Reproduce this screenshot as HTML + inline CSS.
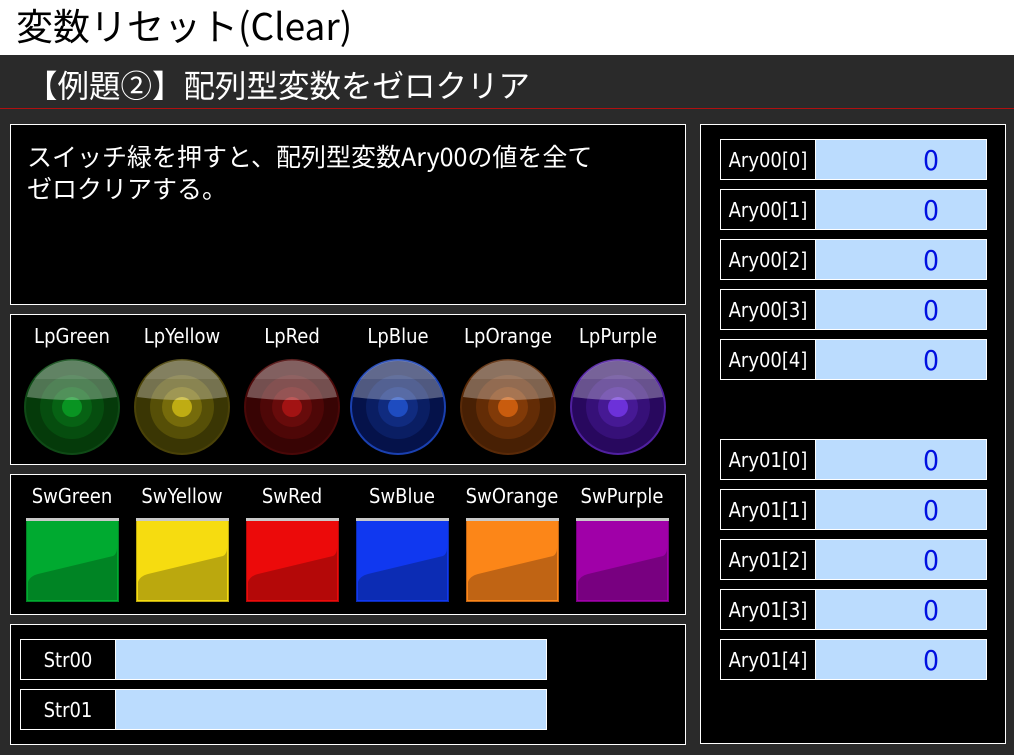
<!DOCTYPE html>
<html><head><meta charset="utf-8"><style>
*{margin:0;padding:0;box-sizing:border-box}
body{width:1014px;height:755px;background:#2a2a2a;position:relative;overflow:hidden;font-family:"DejaVu Sans Condensed","Liberation Sans","Noto Sans CJK JP",sans-serif;color:#fff}
.a{position:absolute}
.box{position:absolute;background:#000;border:1px solid #fff}
.top{left:0;top:0;width:1014px;height:55px;background:#fff;color:#000;font-size:37px;line-height:48px;padding-left:16px;font-family:"Noto Sans CJK JP",sans-serif}
.h2{left:26px;top:63px;font-size:31.5px;line-height:42px;font-family:"Noto Sans CJK JP",sans-serif;color:#fff}
.lbl{position:absolute;font-size:20px;text-align:center;width:110px;line-height:24px}
.row{position:absolute;height:41px;border:1px solid #fff;background:#bbdcfe}
.row .k{position:absolute;left:0;top:0;height:39px;width:95px;background:#000;border-right:1px solid #fff;font-size:20px;line-height:41px;text-align:center;color:#fff}
.row .v{position:absolute;left:180px;width:60px;top:0;text-align:center;color:#0010e0;font-size:28px;line-height:42px;font-family:"DejaVu Sans Condensed","Liberation Sans",sans-serif}
</style></head><body>
<div class="a top">変数リセット(Clear)</div>
<div class="a h2">【例題②】配列型変数をゼロクリア</div>
<div class="a" style="left:0;top:108px;width:1014px;height:1px;background:#b01010"></div>

<div class="box" style="left:10px;top:124px;width:676px;height:181px;font-family:'Noto Sans CJK JP',sans-serif;font-size:25px;line-height:32px;padding:15px 0 0 16px">スイッチ緑を押すと、配列型変数Ary00の値を全て<br>ゼロクリアする。</div>

<div class="box" style="left:10px;top:314px;width:676px;height:151px"></div>
<div class="box" style="left:10px;top:474px;width:676px;height:141px"></div>
<div class="box" style="left:10px;top:624px;width:676px;height:121px"></div>
<div class="box" style="left:700px;top:124px;width:306px;height:620px"></div>

<div class="lbl" style="left:17px;top:324px">LpGreen</div>
<div class="lbl" style="left:127px;top:324px">LpYellow</div>
<div class="lbl" style="left:237px;top:324px">LpRed</div>
<div class="lbl" style="left:343px;top:324px">LpBlue</div>
<div class="lbl" style="left:453px;top:324px">LpOrange</div>
<div class="lbl" style="left:563px;top:324px">LpPurple</div>

<svg class="a" style="left:0;top:0" width="700" height="620">
<g id="lamps"></g>
<g id="sws"></g>
</svg>

<div class="lbl" style="left:17px;top:484px">SwGreen</div>
<div class="lbl" style="left:127px;top:484px">SwYellow</div>
<div class="lbl" style="left:237px;top:484px">SwRed</div>
<div class="lbl" style="left:347px;top:484px">SwBlue</div>
<div class="lbl" style="left:457px;top:484px">SwOrange</div>
<div class="lbl" style="left:567px;top:484px">SwPurple</div>

<div class="row" style="left:20px;top:639px;width:527px"><div class="k">Str00</div></div>
<div class="row" style="left:20px;top:689px;width:527px"><div class="k">Str01</div></div>

<div class="row" style="left:720px;top:139px;width:267px"><div class="k">Ary00[0]</div><div class="v">0</div></div>
<div class="row" style="left:720px;top:189px;width:267px"><div class="k">Ary00[1]</div><div class="v">0</div></div>
<div class="row" style="left:720px;top:239px;width:267px"><div class="k">Ary00[2]</div><div class="v">0</div></div>
<div class="row" style="left:720px;top:289px;width:267px"><div class="k">Ary00[3]</div><div class="v">0</div></div>
<div class="row" style="left:720px;top:339px;width:267px"><div class="k">Ary00[4]</div><div class="v">0</div></div>
<div class="row" style="left:720px;top:439px;width:267px"><div class="k">Ary01[0]</div><div class="v">0</div></div>
<div class="row" style="left:720px;top:489px;width:267px"><div class="k">Ary01[1]</div><div class="v">0</div></div>
<div class="row" style="left:720px;top:539px;width:267px"><div class="k">Ary01[2]</div><div class="v">0</div></div>
<div class="row" style="left:720px;top:589px;width:267px"><div class="k">Ary01[3]</div><div class="v">0</div></div>
<div class="row" style="left:720px;top:639px;width:267px"><div class="k">Ary01[4]</div><div class="v">0</div></div>

<script>
var L=[[72,'#053a0a','#0a9a24','#0f4a16'],[182,'#3a3604','#c8b414','#4a4208'],[292,'#380404','#a81414','#4a0808'],[398,'#05124a','#2050c8','#1a40b0'],[508,'#482004','#d06010','#5a2a08'],[618,'#28085e','#7034e0','#5020a0']];
var s='';
L.forEach(function(l){var x=l[0],y=407;
s+='<circle cx="'+x+'" cy="'+y+'" r="47" fill="'+l[1]+'" stroke="'+l[3]+'" stroke-width="2"/>';
s+='<circle cx="'+x+'" cy="'+y+'" r="32" fill="'+l[2]+'" opacity=".2"/>';
s+='<circle cx="'+x+'" cy="'+y+'" r="20" fill="'+l[2]+'" opacity=".28"/>';
s+='<circle cx="'+x+'" cy="'+y+'" r="10" fill="'+l[2]+'" opacity=".9"/>';
s+='<path d="M'+(x-45)+' '+(y-10)+' A46 46 0 0 1 '+(x+45)+' '+(y-10)+' Q'+x+' '+(y-4)+' '+(x-45)+' '+(y-10)+'Z" fill="#fff" opacity=".3"/>';
s+='<path d="M'+(x-38)+' '+(y-28)+' A46 46 0 0 1 '+(x+38)+' '+(y-28)+' Z" fill="#fff" opacity=".1"/>';});
document.getElementById('lamps').innerHTML=s;
var S=[[26,'#00aa30','#008424'],[136,'#f6dc10','#bba80e'],[246,'#ec0a0a','#b40808'],[356,'#1038f0','#0c2cb4'],[466,'#fc8618','#c06414'],[576,'#a000a8','#780080']];
s='';
S.forEach(function(c){var x=c[0],y=520,w=93,h=82;
s+='<rect x="'+x+'" y="'+y+'" width="'+w+'" height="'+h+'" fill="'+c[1]+'"/>';
s+='<path d="M'+(x+2)+' '+(y+h-2)+' L'+(x+2)+' '+(y+62)+' Q'+(x+4)+' '+(y+56)+' '+(x+12)+' '+(y+54)+' L'+(x+w-6)+' '+(y+36)+' Q'+(x+w-2)+' '+(y+34)+' '+(x+w-2)+' '+(y+28)+' L'+(x+w-2)+' '+(y+h-2)+'Z" fill="'+c[2]+'"/>';
s+='<rect x="'+(x+0.5)+'" y="'+(y+0.5)+'" width="'+(w-1)+'" height="'+(h-1)+'" fill="none" stroke="'+c[2]+'" stroke-width="1"/>';
s+='<rect x="'+x+'" y="'+(y-2)+'" width="'+w+'" height="3" fill="#c8c8c8"/>';});
document.getElementById('sws').innerHTML=s;
</script>
</body></html>
